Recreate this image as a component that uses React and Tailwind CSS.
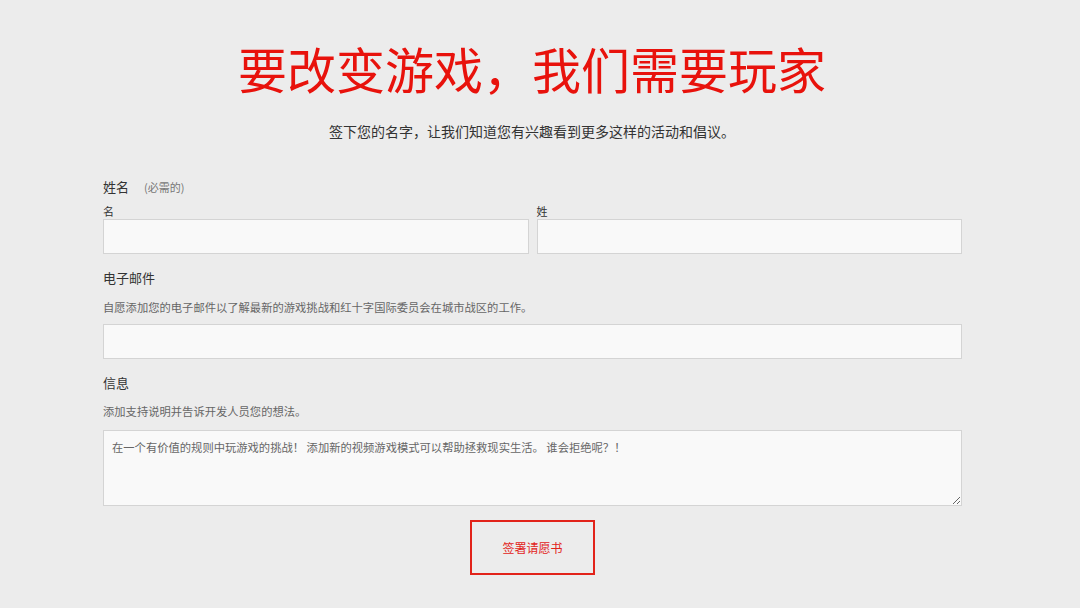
import React from 'react';

const font = { fontFamily: '"Noto Sans CJK SC", "Noto Sans", sans-serif' };

const App = () => {
  return (
    <div className="min-h-[608px] w-full bg-[#ececec] pt-[43px]" style={font}>
      {/* Heading */}
      <h1 className="text-center text-[49px] leading-[49px] font-normal text-[#e8120c] mr-[16px]">
        要改变游戏，我们需要玩家
      </h1>
      <p className="mt-[29px] text-center text-[14px] leading-[20px] text-[#333] mr-[16px]">
        签下您的名字，让我们知道您有兴趣看到更多这样的活动和倡议。
      </p>

      {/* Form */}
      <form className="ml-[103px] w-[859px]" onSubmit={(e) => e.preventDefault()}>
        <div className="mt-[36px] flex items-center text-[13px] leading-[20px] text-[#333]">
          姓名
          <span className="ml-[15px] text-[11px] text-[#777]">(必需的)</span>
        </div>
        <div className="mt-[6px] flex gap-[8px]">
          <div className="flex-1">
            <label className="block text-[11px] leading-[16px] text-[#333]">名</label>
            <input type="text" className="block h-[35px] w-full border border-[#d4d4d4] bg-[#f9f9f9] outline-none" />
          </div>
          <div className="flex-1">
            <label className="block text-[11px] leading-[16px] text-[#333]">姓</label>
            <input type="text" className="block h-[35px] w-full border border-[#d4d4d4] bg-[#f9f9f9] outline-none" />
          </div>
        </div>

        <div className="mt-[14px] text-[13px] leading-[20px] text-[#333]">电子邮件</div>
        <div className="mt-[11px] text-[11.3px] leading-[16px] text-[#666]">
          自愿添加您的电子邮件以了解最新的游戏挑战和红十字国际委员会在城市战区的工作。
        </div>
        <input type="email" className="mt-[9px] block h-[35px] w-full border border-[#d4d4d4] bg-[#f9f9f9] outline-none" />

        <div className="mt-[14px] text-[13px] leading-[20px] text-[#333]">信息</div>
        <div className="mt-[10px] text-[11.3px] leading-[16px] text-[#666]">
          添加支持说明并告诉开发人员您的想法。
        </div>
        <textarea
          className="mt-[11px] block h-[76px] w-full border border-[#d4d4d4] bg-[#f9f9f9] px-[8px] pt-[8px] text-[11.3px] leading-[16px] text-[#666] outline-none"
          defaultValue="在一个有价值的规则中玩游戏的挑战！ 添加新的视频游戏模式可以帮助拯救现实生活。 谁会拒绝呢？！"
        />

        <div className="mt-[14px] flex justify-center">
          <button
            type="submit"
            className="h-[55px] w-[125px] border-2 border-[#e2231a] text-[12px] text-[#e2231a]"
          >
            签署请愿书
          </button>
        </div>
      </form>
    </div>
  );
};

export default App;
